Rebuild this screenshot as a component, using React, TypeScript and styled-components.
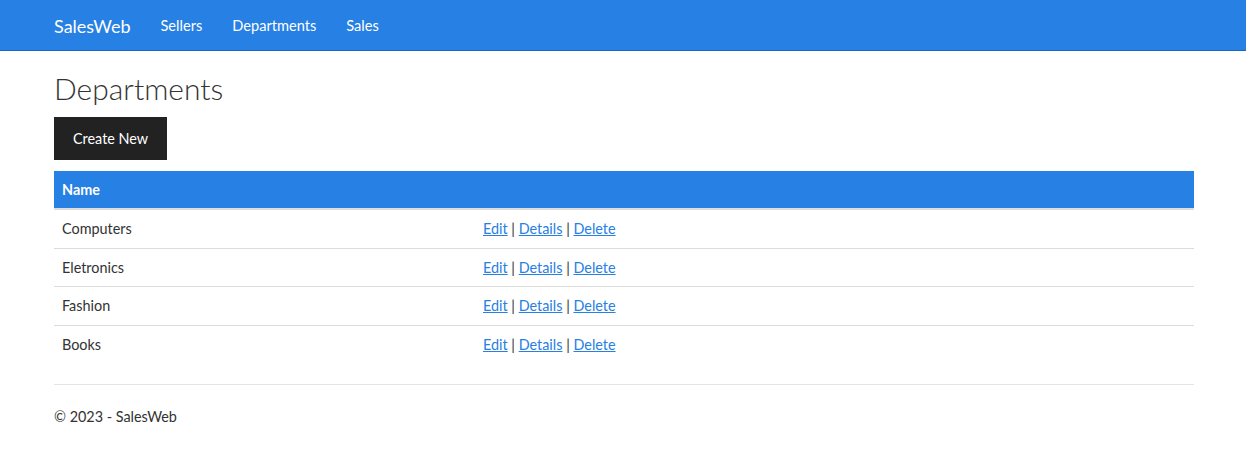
import React from "react";
import styled, { createGlobalStyle } from "styled-components";

const Global = createGlobalStyle`
  * { box-sizing: border-box; }
  html, body { margin: 0; padding: 0; }
  body {
    background: #fff;
    color: #333;
    font-family: Lato, "Open Sans", Arial, sans-serif;
    font-size: 14.4px;
    line-height: 21.43px;
    padding-top: 50px;
  }
`;

const Navbar = styled.nav`
  position: fixed;
  top: 0;
  left: 0;
  right: 0;
  height: 51px;
  background: #2780e3;
  border-bottom: 1px solid #1967be;
  z-index: 10;
`;

const Container = styled.div`
  width: 1170px;
  margin: 0 auto;
  padding: 0 14px 0 16px;
`;

const NavInner = styled(Container)`
  display: flex;
  align-items: center;
  height: 50px;
  padding-top: 2px;
`;

const Brand = styled.a`
  color: #fff;
  font-size: 18px;
  line-height: 20px;
  padding: 15px 15px 15px 0;
  text-decoration: none;
`;

const NavLink = styled.a`
  color: #fff;
  font-size: 14.6px;
  line-height: 20px;
  padding: 15px;
  text-decoration: none;
`;

const Title = styled.h2`
  font-size: 30px;
  font-weight: 300;
  line-height: 35px;
  margin: 21px 0 11.25px;
  color: #333;
`;

const Para = styled.p`
  margin: 0 0 10.5px;
`;

const Button = styled.a`
  display: inline-block;
  background: #222;
  color: #fff;
  border: 1px solid transparent;
  padding: 10px 18px;
  font-size: 14.4px;
  line-height: 21px;
  text-decoration: none;
  vertical-align: middle;
`;

const Table = styled.table`
  width: 100%;
  border-collapse: collapse;
  margin-bottom: 21px;
`;

const Head = styled.th<{ $w?: string }>`
  background: #2780e3;
  color: #fff;
  font-weight: 700;
  text-align: left;
  padding: 8px;
  border-bottom: 2px solid #ddd;
  width: ${(p) => p.$w || "auto"};
`;

const Cell = styled.td`
  padding: 8px;
  border-top: 1px solid #ddd;
`;

const Link = styled.a`
  color: #2780e3;
  text-decoration: underline;
`;

const Rule = styled.hr`
  border: 0;
  border-top: 1px solid #e5e5e5;
  margin: 21px 0;
`;

const Footer = styled.footer`
  p { margin: 0 0 10.5px; }
`;

const departments = ["Computers", "Eletronics", "Fashion", "Books"];

export default function App() {
  return (
    <>
      <Global />
      <Navbar>
        <NavInner>
          <Brand href="#">SalesWeb</Brand>
          <NavLink href="#">Sellers</NavLink>
          <NavLink href="#">Departments</NavLink>
          <NavLink href="#">Sales</NavLink>
        </NavInner>
      </Navbar>
      <Container>
        <Title>Departments</Title>
        <Para>
          <Button href="#">Create New</Button>
        </Para>
        <Table>
          <thead>
            <tr>
              <Head $w="421px">Name</Head>
              <Head />
            </tr>
          </thead>
          <tbody>
            {departments.map((d) => (
              <tr key={d}>
                <Cell>{d}</Cell>
                <Cell>
                  <Link href="#">Edit</Link> | <Link href="#">Details</Link> |{" "}
                  <Link href="#">Delete</Link>
                </Cell>
              </tr>
            ))}
          </tbody>
        </Table>
        <Rule />
        <Footer>
          <p>© 2023 - SalesWeb</p>
        </Footer>
      </Container>
    </>
  );
}
